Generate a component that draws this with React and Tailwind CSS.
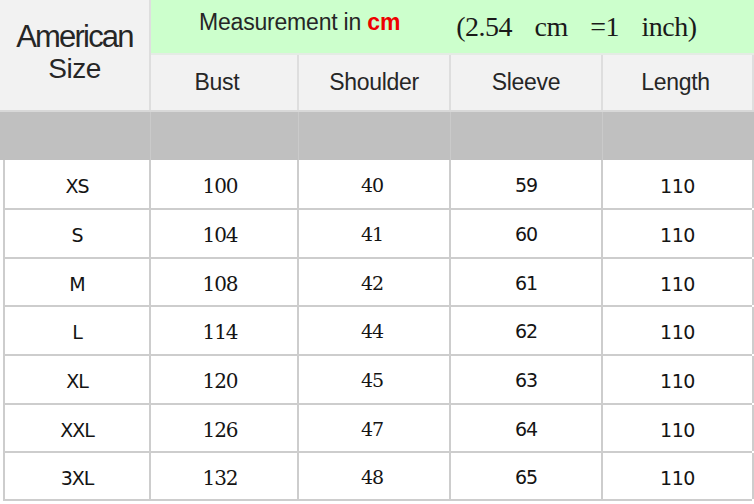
import React from "react";

const rows = [
    ["XS", "100", "40", "59", "110"],
    ["S", "104", "41", "60", "110"],
    ["M", "108", "42", "61", "110"],
    ["L", "114", "44", "62", "110"],
    ["XL", "120", "45", "63", "110"],
    ["XXL", "126", "47", "64", "110"],
    ["3XL", "132", "48", "65", "110"],
];

const rowHeights = ["h-[50px]", "h-[49px]", "h-[48px]", "h-[49px]", "h-[49px]", "h-[48px]", "h-[48px]"];

const sans = "font-['Liberation_Sans',Arial,sans-serif]";
const dvSans = "font-['DejaVu_Sans',Verdana,sans-serif]";
const dvSerif = "font-['DejaVu_Serif',serif]";

function App() {
    return (
        <div className="w-[754px] h-[504px] bg-white overflow-hidden text-[#141414]">
            {/* header */}
            <div className="grid grid-cols-[151px_148px_152px_152px_151px] grid-rows-[55px_55px]">
                <div className={`row-span-2 bg-[#f2f2f2] border-r-2 border-[#dedede] flex flex-col items-center justify-center pb-[4px] ${sans}`}>
                    <div className="text-[31px] leading-[32px] tracking-[-1.8px] text-[#262626]">American</div>
                    <div className="text-[28px] leading-[32px] tracking-[-0.5px] text-[#262626]">Size</div>
                </div>
                <div className="col-span-4 bg-[#ccffcc] border-b-2 border-[#e4ece4] flex items-start pl-[48px]">
                    <span className={`${sans} text-[23px] leading-none mt-[11px] tracking-[-0.2px] text-[#262626]`}>
                        Measurement in <span className="font-bold text-[#ee0000]">cm</span>
                    </span>
                    <span className="font-['Liberation_Serif',serif] text-[28px] leading-none mt-[13px] ml-[56px] tracking-[-0.5px] [word-spacing:16px] text-[#1a1a1a]">
                        (2.54 cm =1 inch)
                    </span>
                </div>
                {["Bust", "Shoulder", "Sleeve", "Length"].map((h, i) => (
                    <div
                        key={h}
                        className={`bg-[#f2f2f2] border-r-2 border-[#dedede] flex items-center justify-center ${i === 0 ? "pr-[14px]" : ""} ${i === 3 ? "pr-[4px]" : ""} ${sans} text-[23px] tracking-[-0.3px] text-[#262626]`}
                    >
                        {h}
                    </div>
                ))}
            </div>

            {/* grey band */}
            <div className="h-[50px] bg-[#c0c0c0] border-t-2 border-[#d8d8d8] grid grid-cols-[151px_148px_152px_152px_151px]">
                <div className="border-r border-[#cacaca]" />
                <div className="border-r border-[#cacaca]" />
                <div className="border-r border-[#cacaca]" />
                <div className="border-r border-[#cacaca]" />
                <div />
            </div>

            {/* data */}
            <div className="ml-[3px] w-[749px] border-l-2 border-[#cdcdcd]">
                {rows.map((r, i) => (
                    <div
                        key={r[0]}
                        className={`grid grid-cols-[146px_148px_152px_152px_151px] border-b-2 border-[#cdcdcd] ${rowHeights[i]}`}
                    >
                        <div className={`border-r-2 border-[#cdcdcd] flex items-center justify-center pt-[4px] ${dvSans} text-[19px] tracking-[-1px]`}>
                            {r[0]}
                        </div>
                        <div className={`border-r-2 border-[#cdcdcd] flex items-center justify-center pr-[8px] pt-[3px] ${dvSerif} text-[20px] tracking-[-1px]`}>
                            {r[1]}
                        </div>
                        <div className={`border-r-2 border-[#cdcdcd] flex items-center justify-center pr-[4px] pt-[2px] ${dvSerif} text-[19px] tracking-[-1px]`}>
                            {r[2]}
                        </div>
                        <div className={`border-r-2 border-[#cdcdcd] flex items-center justify-center pt-[2px] ${dvSans} text-[19px] tracking-[-1px]`}>
                            {r[3]}
                        </div>
                        <div className={`border-r-2 border-[#cdcdcd] flex items-center justify-center pt-[4px] ${dvSans} text-[19px] tracking-[-0.5px]`}>
                            {r[4]}
                        </div>
                    </div>
                ))}
            </div>
        </div>
    );
}

export default App;
